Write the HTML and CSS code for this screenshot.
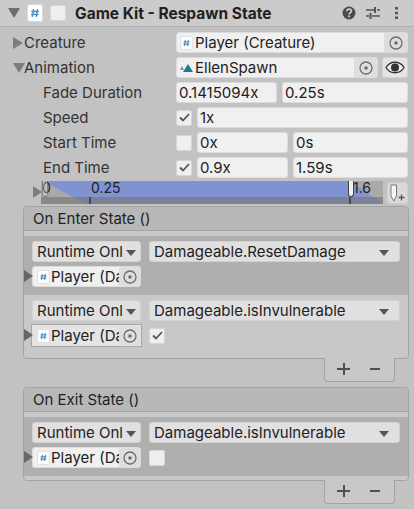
FILE: index.html
```html
<!DOCTYPE html>
<html lang="en">
<head>
    <meta charset="UTF-8">
    <title>Game Kit - Respawn State</title>
    <link rel="stylesheet" href="styles.css">
</head>
<body>
    <div class="header">
        <svg class="fold-arrow" width="12" height="10" viewBox="0 0 12 10"><path d="M0 0h12L6 10z" fill="#6e6e6e"/></svg>
        <svg class="script-icon" width="16" height="18" viewBox="0 0 16 18"><use href="#script"/></svg>
        <span class="check big"></span>
        <span class="title">Game Kit - Respawn State</span>
        <svg class="help" width="14" height="14" viewBox="0 0 14 14"><circle cx="7" cy="7" r="6.5" fill="#4b4b4b"/><path d="M4.8 5.3c0-3 4.6-2.8 4.6-.2 0 1.800-2.300 1.600-2.300 3.400" fill="none" stroke="#cbcbcb" stroke-width="1.700"/><rect x="6.200" y="9.500" width="1.800" height="1.800" fill="#cbcbcb"/></svg>
        <svg class="sliders" width="14" height="12" viewBox="0 0 14 12"><path d="M0 3h8M11 3h3M0 9h3M6 9h8" stroke="#555" stroke-width="1.500"/><path d="M9 0v6M4.500 6v6" stroke="#555" stroke-width="2"/></svg>
        <svg class="dots" width="3" height="12" viewBox="0 0 3 12"><path d="M0 0h3v2.500H0zM0 4.800h3v2.500H0zM0 9.500h3V12H0z" fill="#555"/></svg>
    </div>

    <svg class="defs" width="0" height="0">
        <defs>
            <g id="script">
                <rect x=".5" y=".5" width="15" height="17" rx="2" fill="#fff" stroke="#d8d8d8"/>
                <path d="M6.500 5 5.300 13M10.500 5 9.300 13M4.300 7.500h7.500M4 10.500h7.500" stroke="#4d8ec4" stroke-width="1.400" fill="none"/>
            </g>
            <g id="target">
                <circle cx="7" cy="7" r="6" fill="none" stroke="#6d6d6d" stroke-width="1.300"/>
                <circle cx="7" cy="7" r="1.800" fill="#6d6d6d"/>
            </g>
        </defs>
    </svg>

    <div class="props">
        <div class="row">
            <div class="label"><svg class="arrow" width="10" height="12" viewBox="0 0 10 12"><path d="M0 0l10 6-10 6z" fill="#7d7d7d"/></svg>Creature</div>
            <div class="field obj grow">
                <svg class="mini" width="13" height="14" viewBox="0 0 16 18"><use href="#script"/></svg>
                <span class="obj-name">Player (Creature)</span>
                <span class="picker"><svg width="14" height="14" viewBox="0 0 14 14"><use href="#target"/></svg></span>
            </div>
        </div>
        <div class="row">
            <div class="label"><svg class="arrow" width="12" height="10" viewBox="0 0 12 10"><path d="M0 0h12L6 10z" fill="#7d7d7d"/></svg>Animation</div>
            <div class="field obj grow">
                <svg class="mini" width="13" height="11" viewBox="0 0 13 11"><path d="M0 8l2-4 2 4z" fill="#8a8f90"/><path d="M3 10 8 2l5 8z" fill="#12808f"/></svg>
                <span class="obj-name">EllenSpawn</span>
                <span class="picker"><svg width="14" height="14" viewBox="0 0 14 14"><use href="#target"/></svg></span>
            </div>
            <div class="eye-btn">
                <svg width="20" height="13" viewBox="0 0 20 13"><path d="M1 6.500C5-.5 15-.5 19 6.500 15 13.500 5 13.500 1 6.500z" fill="#eee" stroke="#333" stroke-width="1.300"/><circle cx="10" cy="6.500" r="4" fill="#333"/></svg>
            </div>
        </div>
        <div class="row">
            <div class="label sub">Fade Duration</div>
            <div class="field w-fade">0.1415094x</div>
            <div class="field grow">0.25s</div>
        </div>
        <div class="row">
            <div class="label sub">Speed</div>
            <span class="check on"><svg width="11" height="9" viewBox="0 0 11 9"><path d="M1 4.500 4 7.500 10 1" fill="none" stroke="#555" stroke-width="1.800"/></svg></span>
            <div class="field grow">1x</div>
        </div>
        <div class="row">
            <div class="label sub">Start Time</div>
            <span class="check"></span>
            <div class="field w-half">0x</div>
            <div class="field grow">0s</div>
        </div>
        <div class="row">
            <div class="label sub">End Time</div>
            <span class="check on"><svg width="11" height="9" viewBox="0 0 11 9"><path d="M1 4.500 4 7.500 10 1" fill="none" stroke="#555" stroke-width="1.800"/></svg></span>
            <div class="field w-half">0.9x</div>
            <div class="field grow">1.59s</div>
        </div>
    </div>

    <div class="timeline">
        <div class="track">
            <svg class="track-fill" width="342" height="23" viewBox="0 0 342 23">
                <path d="M2 0H309L342 23H45z" fill="#7f92d2"/>
                <rect y="16" width="342" height="7" fill="#7a7a7a" fill-opacity=".7"/>
                <path d="M49 16v7M309 16v7" stroke="#111"/>
            </svg>
            <span class="tick t0">0</span>
            <span class="tick t25">0.25</span>
            <span class="tick t16">1.6</span>
            <span class="pin first"></span>
            <span class="pin last"></span>
            <svg class="play" width="9" height="12" viewBox="0 0 9 12"><path d="M0 0l9 6-9 6z" fill="#7d7d7d"/></svg>
        </div>
        <div class="add-event">
            <svg width="16" height="18" viewBox="0 0 16 18"><path d="M1 1h5.500v11L3.750 17 1 12z" fill="#f6f6f6" stroke="#777"/><path d="M8.500 13.500h6M11.500 10.500v6" stroke="#555" stroke-width="1.300"/></svg>
        </div>
    </div>

    <div class="event">
        <div class="event-head">On Enter State ()</div>
        <div class="event-strip"></div>
        <div class="call dark">
            <div class="call-line">
                <div class="drop runtime">Runtime Onl<i></i></div>
                <div class="drop func">Damageable.ResetDamage<i></i></div>
            </div>
            <div class="call-line">
                <svg class="grip" width="9" height="12" viewBox="0 0 9 12"><path d="M0 0l9 6-9 6z" fill="#666"/></svg>
                <div class="field obj target"><svg class="mini" width="13" height="14" viewBox="0 0 16 18"><use href="#script"/></svg><span class="obj-name">Player (Da</span><span class="picker"><svg width="14" height="14" viewBox="0 0 14 14"><use href="#target"/></svg></span></div>
            </div>
        </div>
        <div class="call light">
            <div class="call-line">
                <div class="drop runtime">Runtime Onl<i></i></div>
                <div class="drop func">Damageable.isInvulnerable<i></i></div>
            </div>
            <div class="call-line">
                <svg class="grip" width="9" height="12" viewBox="0 0 9 12"><path d="M0 0l9 6-9 6z" fill="#666"/></svg>
                <div class="field obj target outlined"><svg class="mini" width="13" height="14" viewBox="0 0 16 18"><use href="#script"/></svg><span class="obj-name">Player (Da</span><span class="picker"><svg width="14" height="14" viewBox="0 0 14 14"><use href="#target"/></svg></span></div>
                <span class="check on"><svg width="11" height="9" viewBox="0 0 11 9"><path d="M1 4.500 4 7.500 10 1" fill="none" stroke="#555" stroke-width="1.800"/></svg></span>
            </div>
        </div>
    </div>
    <div class="footer"><div class="tab"><span class="plus"></span><span class="minus"></span></div></div>

    <div class="event">
        <div class="event-head">On Exit State ()</div>
        <div class="event-strip"></div>
        <div class="call dark">
            <div class="call-line">
                <div class="drop runtime">Runtime Onl<i></i></div>
                <div class="drop func">Damageable.isInvulnerable<i></i></div>
            </div>
            <div class="call-line">
                <svg class="grip" width="9" height="12" viewBox="0 0 9 12"><path d="M0 0l9 6-9 6z" fill="#666"/></svg>
                <div class="field obj target"><svg class="mini" width="13" height="14" viewBox="0 0 16 18"><use href="#script"/></svg><span class="obj-name">Player (Da</span><span class="picker"><svg width="14" height="14" viewBox="0 0 14 14"><use href="#target"/></svg></span></div>
                <span class="check"></span>
            </div>
        </div>
        <div class="event-end"></div>
    </div>
    <div class="footer"><div class="tab"><span class="plus"></span><span class="minus"></span></div></div>
</body>
</html>
```

FILE: styles.css
```css
* {
    box-sizing: border-box;
}
html, body {
    margin: 0;
    height: 509px;
    overflow: hidden;
}
body {
    font-family: Inter, "Liberation Sans", sans-serif;
    font-size: 15px;
    color: #222;
    background: #c2c2c2;
}
.defs {
    position: absolute;
}
.header {
    height: 27px;
    display: flex;
    align-items: center;
    padding-left: 8px;
    background: #cbcbcb;
    border-bottom: 1px solid #b2b2b2;
}
.fold-arrow {
    margin-right: 7px;
}
.script-icon {
    margin-right: 7px;
}
.check {
    width: 16px;
    height: 16px;
    flex: none;
    display: flex;
    align-items: center;
    justify-content: center;
    background: #efefef;
    border: 1px solid #d6d6d6;
    border-radius: 2px;
}
.check.big {
    margin-right: 9px;
}
.title {
    font-size: 15.5px;
    font-weight: 700;
    flex: 1;
    white-space: nowrap;
}
.help {
    margin-right: 10px;
}
.sliders {
    margin-right: 15px;
}
.dots {
    margin-right: 16px;
}
.props {
    padding: 5px 6px 0 0;
}
.row {
    display: flex;
    align-items: center;
    height: 21px;
    margin-bottom: 4px;
}
.label {
    width: 176px;
    flex: none;
    display: flex;
    align-items: center;
    padding-left: 24px;
    color: #333;
    position: relative;
}
.label.sub {
    padding-left: 43px;
}
.arrow {
    position: absolute;
    left: 13px;
    top: 50%;
    transform: translate(0, -50%);
}
.field {
    height: 21px;
    background: #f0f0f0;
    border: 1px solid #dcdcdc;
    border-radius: 3px;
    padding-left: 2px;
    line-height: 19px;
    white-space: nowrap;
    overflow: hidden;
    margin-right: 5px;
}
.field.grow {
    flex: 1;
    margin-right: 0;
}
.w-fade {
    width: 101px;
}
.w-half {
    width: 91px;
}
.row .check {
    margin-right: 5px;
}
.obj {
    display: flex;
    align-items: center;
    padding: 0 0 0 3px;
}
.mini {
    flex: none;
    margin-right: 2px;
}
.obj-name {
    flex: 1;
    overflow: hidden;
}
.picker {
    flex: none;
    width: 23px;
    height: 100%;
    display: flex;
    align-items: center;
    justify-content: center;
    background: #dedede;
}
.eye-btn {
    width: 26px;
    height: 21px;
    margin-left: 4px;
    flex: none;
    display: flex;
    align-items: center;
    justify-content: center;
    background: #e4e4e4;
    border: 1px solid #d2d2d2;
    border-radius: 3px;
}
.timeline {
    display: flex;
    align-items: flex-start;
    padding-left: 41px;
    height: 25px;
    margin-top: -1px;
}
.track {
    position: relative;
    width: 342px;
    height: 23px;
    background: #a9a9a9;
    margin-right: 4px;
}
.track-fill {
    position: absolute;
    left: 0;
    top: 0;
}
.tick {
    position: absolute;
    top: -2px;
    font-size: 14px;
    line-height: 18px;
}
.t0 {
    left: 1px;
}
.t25 {
    left: 50px;
}
.t16 {
    left: 312px;
}
.pin {
    position: absolute;
    top: 0;
    width: 6px;
    height: 16px;
    border-radius: 0 0 3px 3px;
}
.pin.first {
    left: 1px;
    background: rgba(240, 240, 240, 0.35);
    border: 1px solid rgba(60, 60, 60, 0.45);
    border-top: none;
}
.pin.last {
    left: 307px;
    background: #f2f2f2;
    border: 1px solid #444;
    border-top: none;
}
.play {
    position: absolute;
    left: -8px;
    top: 5px;
}
.add-event {
    width: 21px;
    height: 22px;
    flex: none;
    display: flex;
    align-items: center;
    justify-content: center;
    background: #d9d9d9;
    border: 1px solid #cfcfcf;
    border-radius: 3px;
    margin-top: 1px;
}
.event {
    margin: 0 5px 0 23px;
    border: 1px solid #a3a3a3;
    border-radius: 4px;
    overflow: hidden;
}
.event-head {
    height: 24px;
    line-height: 24px;
    padding-left: 9px;
    background: #b8b8b8;
    border-bottom: 1px solid #a3a3a3;
}
.event-strip {
    height: 5px;
    background: #c8c8c8;
}
.call {
    height: 59px;
    padding-top: 5px;
}
.call.dark {
    background: #afafaf;
}
.call.light {
    background: #c8c8c8;
    height: 63px;
}
.event-end {
    height: 4px;
    background: #c8c8c8;
}
.call-line {
    display: flex;
    align-items: center;
    height: 21px;
    margin-bottom: 4px;
    padding-left: 8px;
    position: relative;
}
.grip {
    position: absolute;
    left: 0;
    top: 4px;
}
.drop {
    height: 21px;
    line-height: 20px;
    background: #e0e0e0;
    border: 1px solid #d2d2d2;
    border-radius: 3px;
    padding-left: 4px;
    position: relative;
    white-space: nowrap;
    overflow: hidden;
}
.drop i {
    position: absolute;
    right: 10px;
    top: 8px;
    border: 5px solid transparent;
    border-top: 6px solid #555;
    border-bottom: none;
}
.runtime {
    width: 109px;
    margin-right: 8px;
}
.runtime i {
    right: 4px;
}
.func {
    width: 251px;
}
.target {
    width: 109px;
    margin-right: 8px;
    padding-left: 4px;
}
.target .picker {
    width: 21px;
}
.target .mini {
    margin-right: 1px;
}
.outlined {
    background: #e4e4e4;
    border-color: #e4e4e4;
    border-radius: 0;
    overflow: visible;
    outline: 1px solid #a6a6a6;
}
.footer {
    display: flex;
    justify-content: flex-end;
    padding-right: 19px;
    height: 28px;
}
.tab {
    width: 71px;
    height: 24px;
    margin-top: -1px;
    background: #c8c8c8;
    border: 1px solid #a3a3a3;
    border-top: none;
    border-radius: 0 0 4px 4px;
    position: relative;
    z-index: 1;
}
.plus, .minus {
    position: absolute;
    top: 10px;
    width: 13px;
    height: 2px;
    background: #4f4f4f;
}
.plus {
    left: 12px;
}
.plus::after {
    content: "";
    position: absolute;
    left: 5.500px;
    top: -5px;
    width: 2px;
    height: 12px;
    background: #4f4f4f;
}
.minus {
    left: 45px;
    width: 10px;
}
```
